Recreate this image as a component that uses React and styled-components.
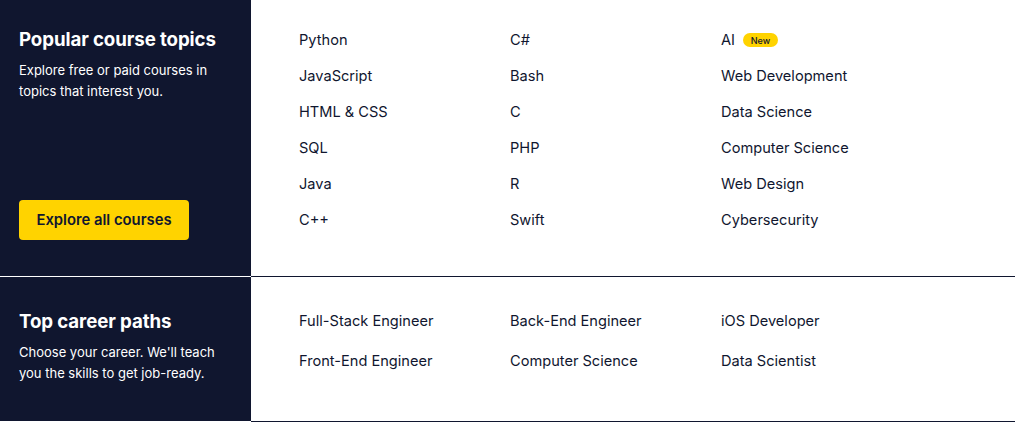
import React from "react";
import styled, { createGlobalStyle } from "styled-components";

const navy = "#10162f";
const yellow = "#ffd300";

const GlobalStyle = createGlobalStyle`
  * { box-sizing: border-box; }
  body {
    margin: 0;
    background: #fff;
    font-family: Inter, "Noto Sans", sans-serif;
    color: ${navy};
  }
`;

const Page = styled.div`
  display: flex;
  flex-direction: column;
  width: 1015px;
`;

const Row = styled.section`
  display: grid;
  grid-template-columns: 251px 1fr;
`;

const Intro = styled.div`
  display: flex;
  flex-direction: column;
  background: ${navy};
  color: #fff;
  padding: ${(p) => p.$pad};
  border-bottom: 1px solid #fff;
`;

const Title = styled.h2`
  margin: 0;
  font-size: 18.7px;
  line-height: 24px;
  font-weight: 700;
  letter-spacing: -0.1px;
`;

const Blurb = styled.p`
  margin: 8px 0 0;
  font-size: 13px;
  line-height: 21px;
  font-weight: 400;
`;

const CtaButton = styled.a`
  display: inline-flex;
  align-items: center;
  justify-content: center;
  align-self: flex-start;
  margin-top: 98px;
  width: 170px;
  height: 40px;
  border-radius: 4px;
  background: ${yellow};
  color: ${navy};
  font-size: 14.8px;
  font-weight: 600;
  text-decoration: none;
  cursor: pointer;
`;

const Links = styled.ul`
  list-style: none;
  margin: 0;
  padding: ${(p) => p.$top}px 0 0 48px;
  display: grid;
  grid-template-columns: repeat(3, 211px);
  grid-template-rows: repeat(${(p) => p.$rows}, ${(p) => p.$rowHeight}px);
  grid-auto-flow: column;
  align-content: start;
  border-bottom: 1px solid ${navy};
`;

const LinkItem = styled.li`
  display: flex;
  align-items: center;
  gap: 8px;
  font-size: 14.6px;
  color: ${navy};
`;

const Badge = styled.span`
  display: inline-flex;
  align-items: center;
  justify-content: center;
  width: 35px;
  height: 14px;
  border-radius: 7px;
  background: ${yellow};
  font-size: 9px;
  font-weight: 500;
  color: ${navy};
`;

const topics = [
  "Python", "JavaScript", "HTML & CSS", "SQL", "Java", "C++",
  "C#", "Bash", "C", "PHP", "R", "Swift",
  "AI", "Web Development", "Data Science", "Computer Science", "Web Design", "Cybersecurity",
];

const careers = [
  "Full-Stack Engineer", "Front-End Engineer",
  "Back-End Engineer", "Computer Science",
  "iOS Developer", "Data Scientist",
];

export default function App() {
  return (
    <>
      <GlobalStyle />
      <Page>
        <Row>
          <Intro $pad="28px 19px 36px">
            <Title>Popular course topics</Title>
            <Blurb>
              Explore free or paid courses in
              <br />
              topics that interest you.
            </Blurb>
            <CtaButton>Explore all courses</CtaButton>
          </Intro>
          <Links $top={22} $rows={6} $rowHeight={36}>
            {topics.map((t) => (
              <LinkItem key={t}>
                {t}
                {t === "AI" && <Badge>New</Badge>}
              </LinkItem>
            ))}
          </Links>
        </Row>
        <Row>
          <Intro $pad="33px 19px 37px">
            <Title>Top career paths</Title>
            <Blurb>
              Choose your career. We'll teach
              <br />
              you the skills to get job-ready.
            </Blurb>
          </Intro>
          <Links $top={24} $rows={2} $rowHeight={40}>
            {careers.map((c) => (
              <LinkItem key={c}>{c}</LinkItem>
            ))}
          </Links>
        </Row>
      </Page>
    </>
  );
}
